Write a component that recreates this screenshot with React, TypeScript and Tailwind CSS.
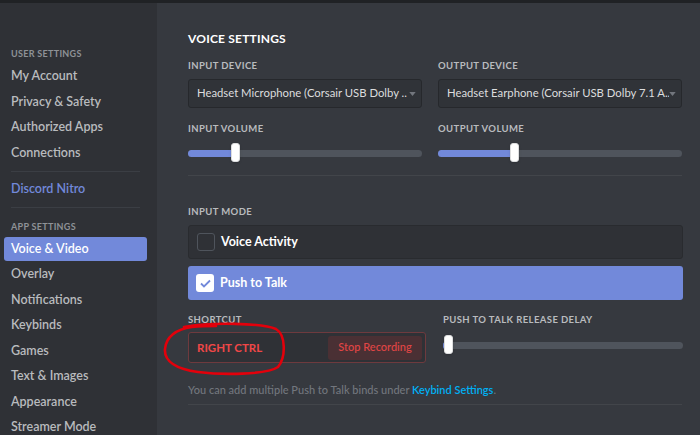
import React from 'react';

const userItems = ['My Account', 'Privacy & Safety', 'Authorized Apps', 'Connections'];
const appItems = ['Voice & Video', 'Overlay', 'Notifications', 'Keybinds', 'Games', 'Text & Images', 'Appearance', 'Streamer Mode'];

function Label({ children }: { children: React.ReactNode }) {
  return <div className="text-[9.5px] font-bold uppercase tracking-[0.4px] text-[#b9bbbe] leading-[12px]">{children}</div>;
}

function Slider({ pct, w }: { pct: number; w: string }) {
  return (
    <div className={`relative h-[20px] ${w}`}>
      <div className="absolute left-0 right-0 top-[7px] h-[7px] rounded-full bg-[#4f545c]" />
      <div className="absolute left-0 top-[7px] h-[7px] rounded-full bg-[#7289da]" style={{ width: `${pct}%` }} />
      <div
        className="absolute top-0 h-[19px] w-[9px] rounded-[3px] bg-white border border-[#dcddde] shadow"
        style={{ left: `calc(${pct}% - 4px)` }}
      />
    </div>
  );
}

function Select({ text }: { text: string }) {
  return (
    <div className="flex h-[29px] items-center justify-between overflow-hidden rounded-[3px] border border-[#26282c] bg-[#303338] pl-[8px] pr-[5px]">
      <span className="text-[11.3px] text-[#dcddde] whitespace-nowrap overflow-hidden">{text}</span>
      <svg className="shrink-0" width="7" height="4" viewBox="0 0 8 5"><path d="M0 0h8L4 5z" fill="#72767d" /></svg>
    </div>
  );
}

export default function App() {
  return (
    <div className="flex h-[435px] w-[700px] flex-col overflow-hidden bg-[#202225]" style={{ fontFamily: 'Lato, "Noto Sans", sans-serif' }}>
      <div className="h-[3px] shrink-0" />
      <div className="flex flex-1 overflow-hidden">
        {/* sidebar */}
        <div className="w-[157px] shrink-0 bg-[#2f3136] pl-[4px] pr-[10px] pt-[45px]">
          <div className="px-[7px] pb-[4px]"><div className="text-[9px] font-bold uppercase tracking-[0.3px] text-[#8e9297] leading-[12px]">User Settings</div></div>
          {userItems.map((it) => (
            <div key={it} className="px-[7px] h-[25.5px] flex items-center text-[12.5px] font-semibold text-[#b9bbbe]">{it}</div>
          ))}
          <div className="mx-[7px] my-[5px] h-px bg-[#3b3e44]" />
          <div className="px-[7px] h-[25px] flex items-center text-[12.5px] font-semibold text-[#7289da]">Discord Nitro</div>
          <div className="mx-[7px] mt-[5px] mb-[9px] h-px bg-[#3b3e44]" />
          <div className="px-[7px] pt-[4px] pb-[4px]"><div className="text-[9px] font-bold uppercase tracking-[0.3px] text-[#8e9297] leading-[12px]">App Settings</div></div>
          {appItems.map((it, i) => (
            <div
              key={it}
              className={`px-[7px] h-[24px] mb-[1.5px] flex items-center rounded-[3px] text-[12.5px] font-semibold ${i === 0 ? 'bg-[#7289da] text-white' : 'text-[#b9bbbe]'}`}
            >
              {it}
            </div>
          ))}
        </div>

        {/* main */}
        <div className="relative flex-1 bg-[#36393f] pl-[31px] pr-[18px] pt-[28px]">
          <div className="text-[12px] font-bold uppercase tracking-[0.2px] text-white leading-[15px]">Voice Settings</div>

          <div className="mt-[14px] grid grid-cols-[234px_244px] gap-x-[16px]">
            <div>
              <Label>Input Device</Label>
              <div className="mt-[7px]"><Select text="Headset Microphone (Corsair USB Dolby .." /></div>
              <div className="mt-[15px]"><Label>Input Volume</Label></div>
              <div className="mt-[8px]"><Slider pct={20} w="w-[234px]" /></div>
            </div>
            <div>
              <Label>Output Device</Label>
              <div className="mt-[7px]"><Select text="Headset Earphone (Corsair USB Dolby 7.1 A.." /></div>
              <div className="mt-[15px]"><Label>Output Volume</Label></div>
              <div className="mt-[8px]"><Slider pct={31} w="w-[244px]" /></div>
            </div>
          </div>

          <div className="mt-[12px] h-px w-[494px] bg-[#42454a]" />

          <div className="mt-[30px]"><Label>Input Mode</Label></div>
          <div className="mt-[7px] flex h-[34px] w-[495px] items-center rounded-[3px] border border-[#292b2f] bg-[#2f3136] px-[8px]">
            <div className="h-[18px] w-[18px] rounded-[3px] border border-[#4f545c]" />
            <span className="ml-[6px] text-[12.5px] font-bold text-white">Voice Activity</span>
          </div>
          <div className="mt-[7px] flex h-[34px] w-[495px] items-center rounded-[3px] bg-[#7289da] px-[8px]">
            <div className="flex h-[18px] w-[18px] items-center justify-center rounded-[3px] bg-white">
              <svg width="11" height="9" viewBox="0 0 11 9"><path d="M1 4.5l3 3L10 1.5" fill="none" stroke="#7289da" strokeWidth="1.8" /></svg>
            </div>
            <span className="ml-[6px] text-[12.5px] font-bold text-white">Push to Talk</span>
          </div>

          <div className="mt-[14px] grid grid-cols-[238px_240px] gap-x-[17px]">
            <div>
              <Label>Shortcut</Label>
              <div className="mt-[6px] flex h-[31px] items-center justify-between rounded-[3px] border border-[#6e3a3e] bg-[#2f3136] pl-[8px] pr-[3px]">
                <span className="text-[11.5px] font-bold text-[#f04747]">RIGHT CTRL</span>
                <div className="flex h-[24px] w-[94px] items-center justify-center rounded-[3px] bg-[#4a3034] text-[11px] font-medium text-[#e04545]">Stop Recording</div>
              </div>
            </div>
            <div>
              <Label>Push to Talk Release Delay</Label>
              <div className="mt-[9px]"><Slider pct={2} w="w-[240px]" /></div>
            </div>
          </div>

          <div className="mt-[19px] text-[11px] font-medium text-[#72767d]">
            You can add multiple Push to Talk binds under <span className="font-semibold text-[#00b0f4]">Keybind Settings</span>.
          </div>
          <div className="mt-[5px] h-px w-[494px] bg-[#42454a]" />
          <div className="mt-[26px] text-[12px] font-bold uppercase text-white leading-[15px]">Video Settings</div>

          {/* hand-drawn annotation */}
          <svg className="pointer-events-none absolute left-[5px] top-[318px]" width="130" height="56" viewBox="0 0 130 56">
            <path
              d="M22 6 C 50 1, 100 2, 114 8 C 124 14, 124 36, 116 46 C 104 54, 60 54, 36 51 C 14 48, 2 40, 3 28 C 4 16, 14 8, 30 6 C 40 5, 48 5, 54 5"
              fill="none"
              stroke="#e3000b"
              strokeWidth="2.6"
              strokeLinecap="round"
            />
          </svg>
        </div>
      </div>
    </div>
  );
}
